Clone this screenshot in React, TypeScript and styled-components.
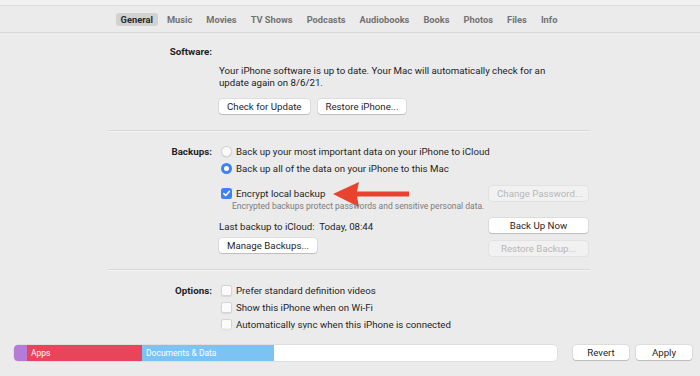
import React from 'react';
import styled, { createGlobalStyle } from 'styled-components';

const GlobalStyle = createGlobalStyle`
  html, body {
    margin: 0;
    padding: 0;
  }
  body {
    background: #ebebeb;
    font-family: Roboto, 'Liberation Sans', Arial, sans-serif;
  }
`;

const Window = styled.div`
  width: 700px;
  height: 376px;
  display: flex;
  flex-direction: column;
  overflow: hidden;
  background: linear-gradient(#f1f1f1 0 5px, #ebebeb 5px);
  color: #1f1f1f;
`;

const TabBar = styled.nav`
  height: 26px;
  margin-top: 5px;
  border-top: 1px solid #dddddd;
  border-bottom: 1px solid #d9d9d9;
  display: flex;
  align-items: center;
  justify-content: center;
  gap: 4px;
  padding-right: 22px;
`;

const Tab = styled.span<{ $active?: boolean }>`
  font-size: 9.3px;
  font-weight: 700;
  line-height: 13px;
  padding: 0 5px;
  border-radius: 3px;
  color: ${(p) => (p.$active ? '#2a2a2a' : '#737373')};
  background: ${(p) => (p.$active ? '#d2d2d2' : 'transparent')};
`;

const Scroll = styled.div`
  flex: 1;
  min-height: 0;
  position: relative;
  overflow: hidden;
  padding: 10px 0 0 108px;

  &::after {
    content: '';
    position: absolute;
    left: 0;
    right: 0;
    bottom: 0;
    height: 8px;
    background: linear-gradient(rgba(235, 235, 235, 0.5), #ebebeb);
  }
`;

const Content = styled.div`
  width: 482px;
`;

const Section = styled.section<{ $top?: number }>`
  display: grid;
  grid-template-columns: 104px 1fr;
  column-gap: 7px;
  align-items: start;
  margin-top: ${(p) => p.$top ?? 0}px;
`;

const Label = styled.div`
  grid-column: 1;
  font-size: 9.8px;
  font-weight: 700;
  line-height: 17px;
  text-align: right;
  color: #1e1e1e;
`;

const Body = styled.div<{ $below?: boolean }>`
  grid-column: 2;
  grid-row: ${(p) => (p.$below ? 2 : 1)};
  display: flex;
  flex-direction: column;
`;

const Paragraph = styled.p`
  margin: 5px 0 0;
  font-size: 9.7px;
  line-height: 12px;
  color: #222;
`;

const ButtonRow = styled.div<{ $top?: number }>`
  display: flex;
  gap: 8px;
  margin-top: ${(p) => p.$top ?? 0}px;
`;

const Button = styled.button<{ $width?: number; $top?: number }>`
  height: 15px;
  width: ${(p) => (p.$width ? `${p.$width}px` : 'auto')};
  margin-top: ${(p) => p.$top ?? 0}px;
  padding: 0 8px;
  border: none;
  border-radius: 3px;
  font-family: inherit;
  font-size: 9.7px;
  line-height: 15px;
  color: ${(p) => (p.disabled ? '#b7b7b7' : '#1f1f1f')};
  background: ${(p) => (p.disabled ? '#f1f1f1' : '#ffffff')};
  box-shadow: ${(p) =>
    p.disabled
      ? '0 0 0 0.5px rgba(0,0,0,0.08)'
      : '0 0 0 0.5px rgba(0,0,0,0.12), 0 1px 1px rgba(0,0,0,0.14)'};
  white-space: nowrap;
`;

const Separator = styled.hr<{ $top: number }>`
  margin: ${(p) => p.$top}px 0 0;
  height: 0;
  border: none;
  border-top: 1px solid #d8d8d8;
  border-bottom: 1px solid #f5f5f5;
`;

const Option = styled.label`
  display: flex;
  align-items: center;
  gap: 4px;
  height: 17px;
  padding-left: 2px;
  font-size: 9.7px;
  color: #1f1f1f;
`;

const Radio = styled.span<{ $on?: boolean }>`
  width: 11px;
  height: 11px;
  box-sizing: border-box;
  border-radius: 50%;
  background: ${(p) => (p.$on ? '#fff' : '#fbfbfb')};
  border: ${(p) => (p.$on ? '3px solid #3d82f3' : '0.5px solid #d0d0d0')};
  box-shadow: ${(p) => (p.$on ? 'none' : '0 0.5px 1px rgba(0,0,0,0.1)')};
  flex: none;
`;

const Box = styled.span<{ $on?: boolean }>`
  width: 11px;
  height: 11px;
  box-sizing: border-box;
  border-radius: 2.5px;
  background: ${(p) => (p.$on ? '#3d82f3' : '#fbfbfb')};
  border: ${(p) => (p.$on ? 'none' : '0.5px solid #d3d3d3')};
  box-shadow: ${(p) => (p.$on ? 'none' : '0 0.5px 1px rgba(0,0,0,0.08)')};
  display: flex;
  align-items: center;
  justify-content: center;
  flex: none;
`;

const Split = styled.div`
  display: flex;
  justify-content: space-between;
  margin-top: 9px;
`;

const LeftCol = styled.div`
  display: flex;
  flex-direction: column;
  align-items: flex-start;
`;

const RightCol = styled.div`
  display: flex;
  flex-direction: column;
  margin-right: 2px;
`;

const CheckRow = styled.div`
  display: flex;
  align-items: center;
  height: 15px;
`;

const Hint = styled.div`
  padding-left: 13px;
  font-size: 8.5px;
  line-height: 11px;
  color: #7b7b7b;
`;

const Info = styled.div`
  margin-top: 8px;
  font-size: 9.7px;
  line-height: 13px;
  white-space: pre;
`;

const BottomBar = styled.footer`
  height: 31px;
  flex: none;
  display: flex;
  align-items: flex-start;
  padding: 9px 0 0 14px;
  gap: 16px;
`;

const Storage = styled.div`
  width: 543px;
  height: 16px;
  display: flex;
  border-radius: 4px;
  overflow: hidden;
  background: #fff;
  box-shadow: 0 0 0 0.5px rgba(0, 0, 0, 0.1);
`;

const Segment = styled.div<{ $color: string; $width: number }>`
  width: ${(p) => p.$width}px;
  background: ${(p) => p.$color};
  color: #fff;
  font-size: 8.5px;
  line-height: 16px;
  padding-left: 4px;
  box-sizing: border-box;
  white-space: nowrap;
`;

const Actions = styled.div`
  display: flex;
  gap: 7px;
`;

const tabs = ['General', 'Music', 'Movies', 'TV Shows', 'Podcasts', 'Audiobooks', 'Books', 'Photos', 'Files', 'Info'];

const Check = () => (
  <svg width="9" height="9" viewBox="0 0 9 9">
    <path d="M1.8 4.6 L3.7 6.5 L7.3 2.4" fill="none" stroke="#fff" strokeWidth="1.5" strokeLinecap="round" strokeLinejoin="round" />
  </svg>
);

const Arrow = () => (
  <svg width="78" height="30" viewBox="0 0 78 30" style={{ marginLeft: 8 }}>
    <path d="M0 15 L26 3 L24 12.6 L76 12.6 L76 17.4 L24 17.4 L26 28 Z" fill="#e8432f" />
  </svg>
);

function App() {
  return (
    <Window>
      <GlobalStyle />
      <TabBar>
        {tabs.map((t) => (
          <Tab key={t} $active={t === 'General'}>
            {t}
          </Tab>
        ))}
      </TabBar>
      <Scroll>
        <Content>
          <Section>
            <Label>Software:</Label>
            <Body $below>
              <Paragraph>
                Your iPhone software is up to date. Your Mac will automatically check for an
                <br />
                update again on 8/6/21.
              </Paragraph>
              <ButtonRow $top={10}>
                <Button>Check for Update</Button>
                <Button>Restore iPhone...</Button>
              </ButtonRow>
            </Body>
          </Section>
          <Separator $top={16} />
          <Section $top={11}>
            <Label>Backups:</Label>
            <Body>
              <Option>
                <Radio />
                Back up your most important data on your iPhone to iCloud
              </Option>
              <Option>
                <Radio $on />
                Back up all of the data on your iPhone to this Mac
              </Option>
              <Split>
                <LeftCol>
                  <CheckRow>
                    <Option as="div">
                      <Box $on>
                        <Check />
                      </Box>
                      Encrypt local backup
                    </Option>
                    <Arrow />
                  </CheckRow>
                  <Hint>Encrypted backups protect passwords and sensitive personal data.</Hint>
                  <Info>Last backup to iCloud:  Today, 08:44</Info>
                  <Button $top={5}>Manage Backups...</Button>
                </LeftCol>
                <RightCol>
                  <Button $width={99} disabled>
                    Change Password...
                  </Button>
                  <Button $width={99} $top={17}>
                    Back Up Now
                  </Button>
                  <Button $width={99} $top={8} disabled>
                    Restore Backup...
                  </Button>
                </RightCol>
              </Split>
            </Body>
          </Section>
          <Separator $top={13} />
          <Section $top={11}>
            <Label>Options:</Label>
            <Body>
              <Option>
                <Box />
                Prefer standard definition videos
              </Option>
              <Option>
                <Box />
                Show this iPhone when on Wi-Fi
              </Option>
              <Option>
                <Box />
                Automatically sync when this iPhone is connected
              </Option>
              <Option>
                <Box />
                Manually manage music, movies and TV shows
              </Option>
            </Body>
          </Section>
        </Content>
      </Scroll>
      <BottomBar>
        <Storage>
          <Segment $color="#b57bd8" $width={13} />
          <Segment $color="#e8455a" $width={115}>
            Apps
          </Segment>
          <Segment $color="#7cc3f4" $width={132}>
            Documents &amp; Data
          </Segment>
        </Storage>
        <Actions>
          <Button $width={56}>Revert</Button>
          <Button $width={56}>Apply</Button>
        </Actions>
      </BottomBar>
    </Window>
  );
}

export default App;
